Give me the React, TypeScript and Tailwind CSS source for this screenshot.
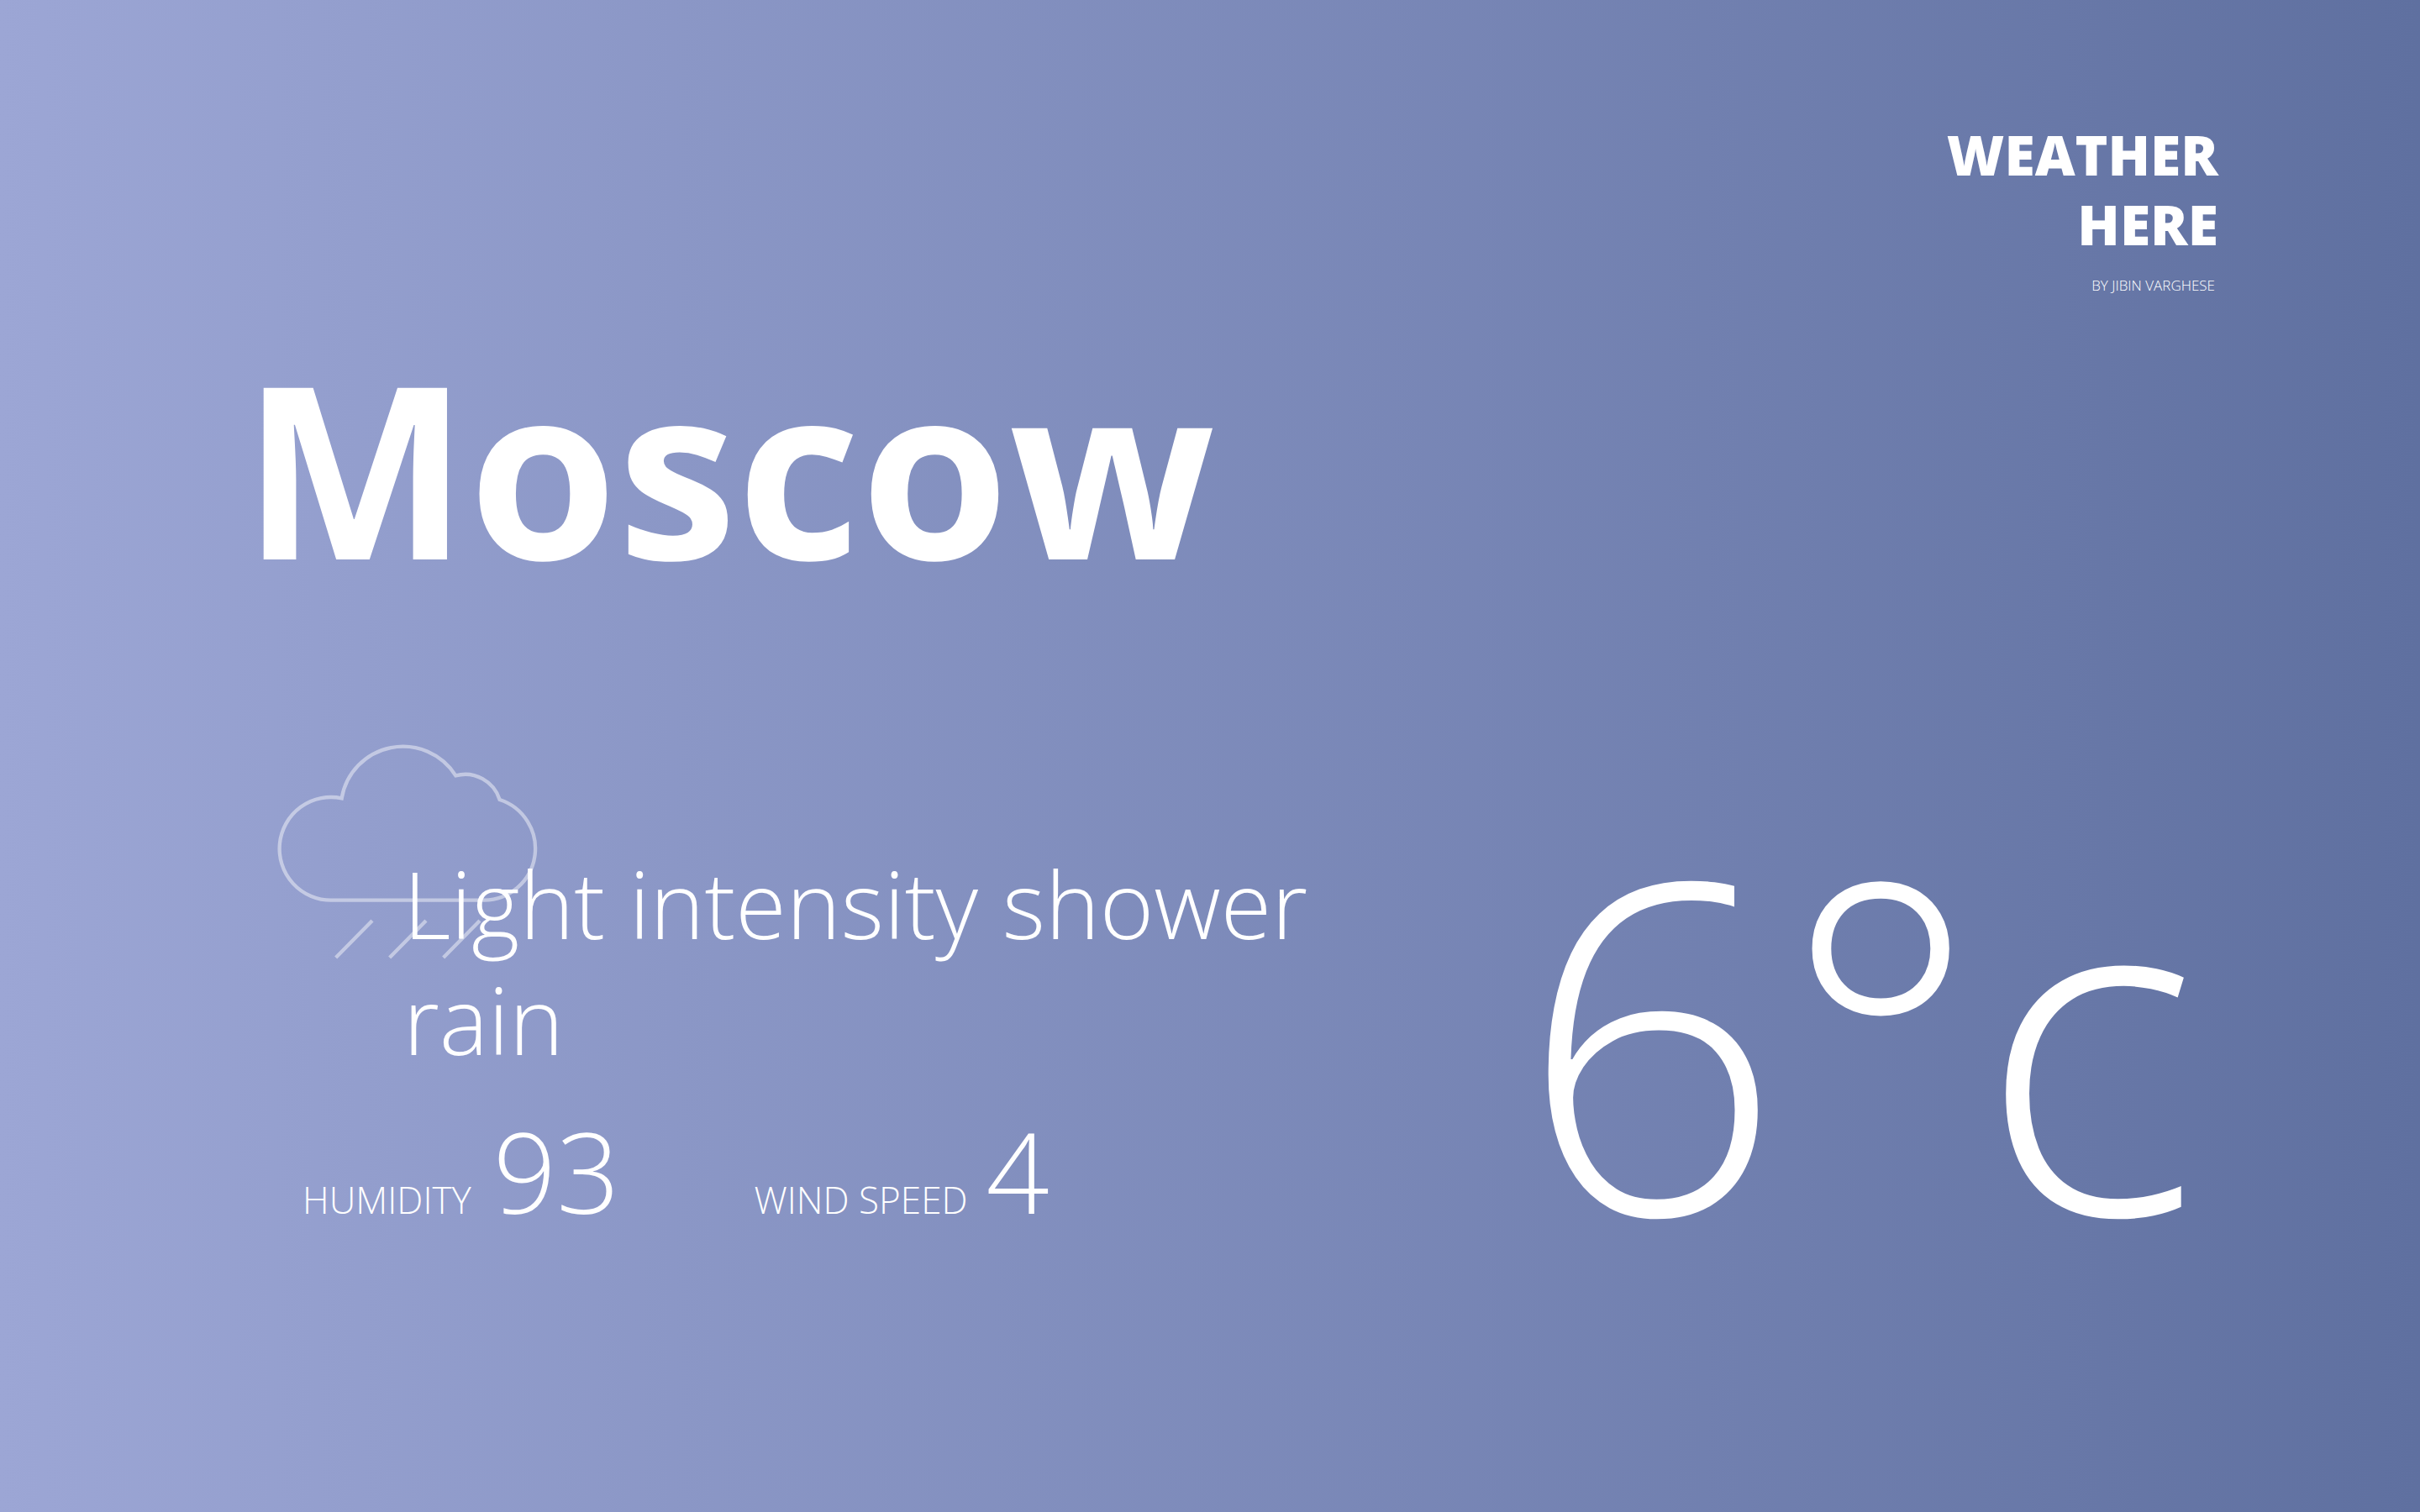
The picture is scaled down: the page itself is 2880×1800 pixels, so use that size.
function ShowerIcon() {
  return (
    <svg
      viewBox="90 76 936 774"
      className="absolute -top-[121px] left-[42px] w-[312px] opacity-45"
      fill="none"
      stroke="white"
      strokeWidth="13"
      aria-hidden="true"
    >
      <path d="M283 636A184 184 0 1 1 320 272A222 222 0 0 1 727 191A129 129 0 0 1 884 277A184 184 0 0 1 829 636Z" />
      <path d="M429 709L299 841M621 709L491 841M813 709L683 841" />
    </svg>
  );
}

export default function App() {
  return (
    <main className="min-h-screen bg-linear-to-r/srgb from-[#9ca6d5] to-[#5f70a0] pt-[142px] pr-[240px] pl-[288px] font-['Open_Sans',sans-serif] text-white">
      <header className="flex flex-col items-end text-right">
        <h1 className="w-[340px] text-[66px] leading-[83px] font-extrabold">WEATHER HERE</h1>
        <p className="mt-5 mr-1 text-[17px] leading-6 font-light">BY JIBIN VARGHESE</p>
      </header>

      <h2 className="mt-6 text-[286px] leading-[358px] font-bold">Moscow</h2>

      <section className="mt-[260px] flex items-end justify-between">
        <div className="relative">
          <ShowerIcon />
          <p className="relative ml-[192px] w-[1152px] text-[110px] leading-[138px] font-light">
            Light intensity shower rain
          </p>
          <dl className="mt-8 ml-[72px] flex gap-40 font-light">
            <div className="flex items-baseline gap-[26px]">
              <dt className="text-[44px] leading-none">HUMIDITY</dt>
              <dd className="text-[132px] leading-[160px]">93</dd>
            </div>
            <div className="flex items-baseline gap-[22px]">
              <dt className="text-[44px] leading-none">WIND SPEED</dt>
              <dd className="text-[132px] leading-[160px]">4</dd>
            </div>
          </dl>
        </div>
        <p className="mr-6 text-[548px] leading-[480px] font-light">6°c</p>
      </section>
    </main>
  );
}
